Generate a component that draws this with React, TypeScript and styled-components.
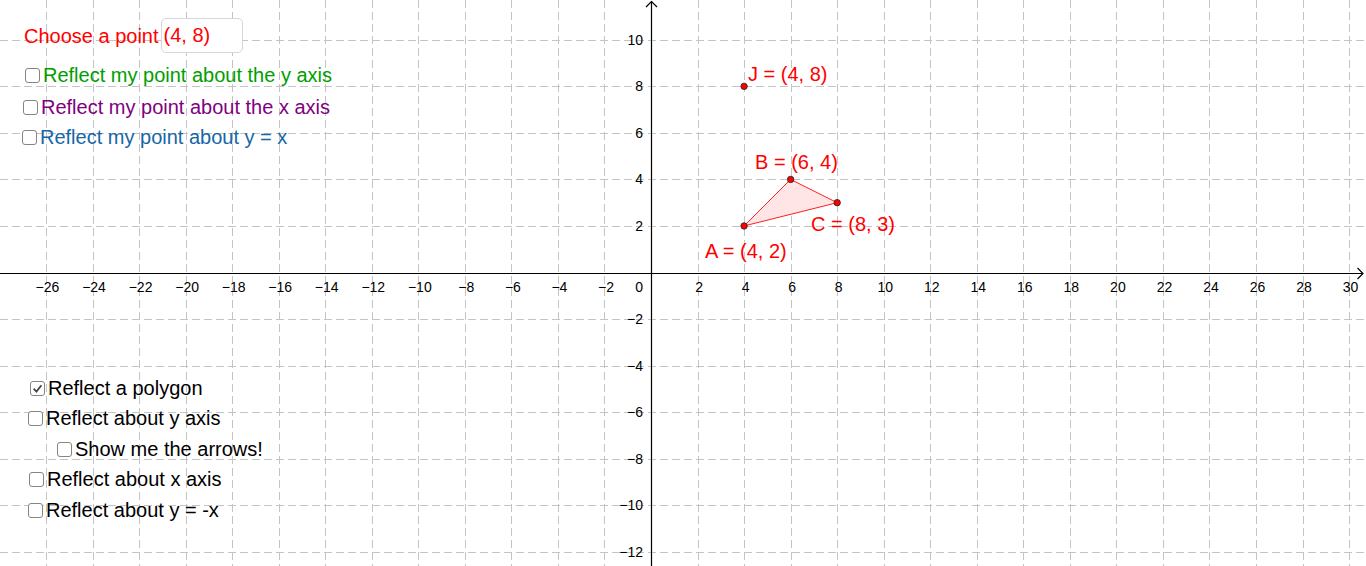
import React from "react"
import styled, { createGlobalStyle } from "styled-components"

const W = 1366
const H = 566
const ORIGIN_X = 651
const ORIGIN_Y = 272.5
const UNIT = 23.27

const toX = (v: number) => ORIGIN_X + v * UNIT
const toY = (v: number) => ORIGIN_Y - v * UNIT
const crisp = (p: number) => Math.round(p) + 0.5

const xTicks: number[] = []
for (let v = -28; v <= 30; v += 2) if (v !== 0) xTicks.push(v)
const yTicks: number[] = []
for (let v = -12; v <= 10; v += 2) if (v !== 0) yTicks.push(v)

const fmt = (v: number) => (v < 0 ? `\u2212${-v}` : `${v}`)

const GlobalStyle = createGlobalStyle`
    html, body {
        margin:0;
        padding:0;
        background:#ffffff;
    }
    body {
        font-family:"Liberation Sans", Arial, sans-serif;
    }
`

const Applet = styled.div`
    position:relative;
    width:${W}px;
    height:${H}px;
    overflow:hidden;
    background:#ffffff;
`
const Graph = styled.svg`
    display:block;
    font-family:"Liberation Sans", Arial, sans-serif;
`
const Widget = styled.div<{ $left: number; $top: number; $color?: string }>`
    position:absolute;
    left:${p => p.$left}px;
    top:${p => p.$top}px;
    display:flex;
    align-items:center;
    gap:3px;
    height:24px;
    line-height:24px;
    font-size:20px;
    white-space:nowrap;
    color:${p => p.$color || "#000000"};
`
const InputWidget = styled(Widget)`
    height:35px;
    gap:2px;
`
const Field = styled.input`
    box-sizing:border-box;
    width:82px;
    height:35px;
    padding:0 2px;
    border:1px solid #d6d6d6;
    border-radius:5px;
    font-family:"Liberation Sans", Arial, sans-serif;
    font-size:20px;
    color:#ff0000;
    background:#ffffff;
    outline:none;
`
const Box = styled.span`
    box-sizing:border-box;
    display:flex;
    align-items:center;
    justify-content:center;
    width:15px;
    height:15px;
    border:1.5px solid #858585;
    border-radius:3px;
    background:#ffffff;
`

const Check = ({ checked = false }: { checked?: boolean }) => (
    <Box>
        {checked && (
            <svg width="11" height="11" viewBox="0 0 10 10">
                <path d="M1.5 5.2 L4 7.8 L8.6 2" fill="none" stroke="#444" strokeWidth="1.6" />
            </svg>
        )}
    </Box>
)

const points = [
    { name: "J", x: 4, y: 8, lx: 748, ly: 81 },
    { name: "B", x: 6, y: 4, lx: 755, ly: 169 },
    { name: "C", x: 8, y: 3, lx: 811, ly: 231 },
    { name: "A", x: 4, y: 2, lx: 705, ly: 258 },
]

const polygon = [
    [4, 2],
    [6, 4],
    [8, 3],
]

const App = () => {
    const ax = crisp(ORIGIN_X)
    const ay = crisp(ORIGIN_Y)
    const poly = polygon.map(([x, y]) => `${toX(x)},${toY(y)}`).join(" ")
    return (
        <>
            <GlobalStyle />
            <Applet>
                <Graph width={W} height={H} viewBox={`0 0 ${W} ${H}`}>
                    <g stroke="#c4c4c4" strokeWidth="1" strokeDasharray="8 4">
                        {xTicks.map(v => (
                            <line key={`gx${v}`} x1={crisp(toX(v))} y1={0} x2={crisp(toX(v))} y2={H} />
                        ))}
                        {yTicks.map(v => (
                            <line key={`gy${v}`} x1={0} y1={crisp(toY(v))} x2={W} y2={crisp(toY(v))} />
                        ))}
                    </g>

                    <g stroke="#000" strokeWidth="1.2" fill="none">
                        <line x1={ax} y1={1} x2={ax} y2={H} />
                        <line x1={0} y1={ay} x2={W - 3} y2={ay} />
                        <path d={`M${ax - 5.5} ${7} L${ax} ${1.5} L${ax + 5.5} ${7}`} />
                        <path d={`M${W - 8.5} ${ay - 5.5} L${W - 3} ${ay} L${W - 8.5} ${ay + 5.5}`} />
                    </g>

                    <g fontSize="14" fill="#000">
                        {xTicks
                            .filter(v => v >= -26)
                            .map(v => (
                                <text key={`lx${v}`} x={toX(v) + 1.5} y={292} textAnchor="middle">
                                    {fmt(v)}
                                </text>
                            ))}
                        <text x={643} y={292} textAnchor="end">0</text>
                        {yTicks.map(v => (
                            <text key={`ly${v}`} x={643} y={toY(v) + 5} textAnchor="end">
                                {fmt(v)}
                            </text>
                        ))}
                    </g>

                    <polygon points={poly} fill="#ffe5e5" stroke="none" />
                    <polygon points={poly} fill="none" stroke="#ff2020" strokeWidth="1" strokeLinejoin="round" />

                    {points.map(p => (
                        <g key={p.name}>
                            <circle cx={toX(p.x)} cy={toY(p.y)} r={3.2} fill="#ff0000" stroke="#2b2b2b" strokeWidth="0.9" />
                            <text x={p.lx} y={p.ly} fontSize="20" fill="#ff0000">
                                {`${p.name} = (${p.x}, ${p.y})`}
                            </text>
                        </g>
                    ))}
                </Graph>

                <InputWidget $left={24} $top={18} $color="#ff0000">
                    <span>Choose a point</span>
                    <Field defaultValue="(4, 8)" />
                </InputWidget>

                <Widget $left={25} $top={63} $color="#009e00">
                    <Check />Reflect my point about the y axis
                </Widget>
                <Widget $left={23} $top={95} $color="#800080">
                    <Check />Reflect my point about the x axis
                </Widget>
                <Widget $left={22} $top={125} $color="#1766a6">
                    <Check />Reflect my point about y = x
                </Widget>

                <Widget $left={30} $top={376}>
                    <Check checked />Reflect a polygon
                </Widget>
                <Widget $left={28} $top={406}>
                    <Check />Reflect about y axis
                </Widget>
                <Widget $left={57} $top={437}>
                    <Check />Show me the arrows!
                </Widget>
                <Widget $left={29} $top={467}>
                    <Check />Reflect about x axis
                </Widget>
                <Widget $left={28} $top={498}>
                    <Check />Reflect about y = -x
                </Widget>
            </Applet>
        </>
    )
}

export default App
